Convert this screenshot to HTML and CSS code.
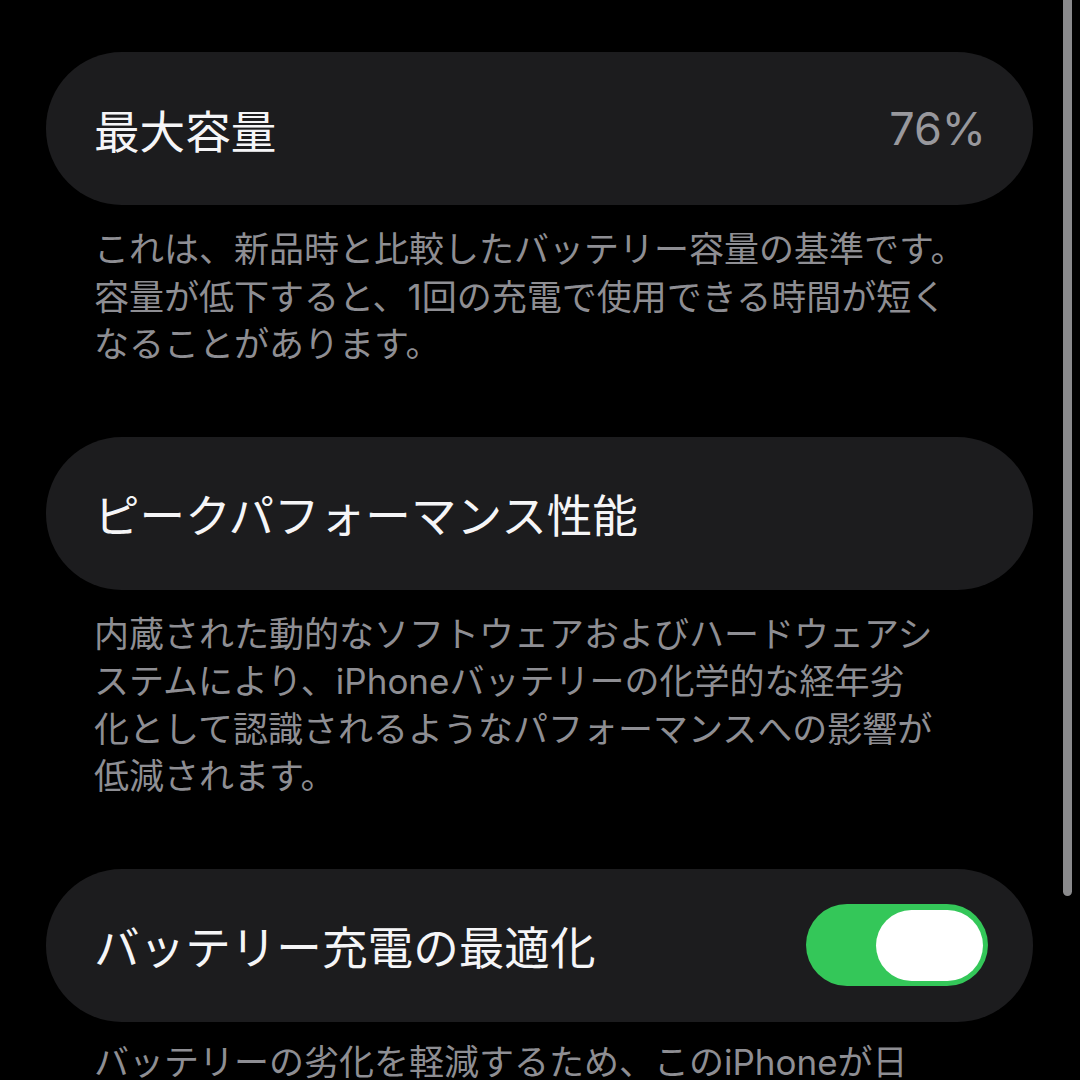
FILE: index.html
```html
<!DOCTYPE html>
<html lang="ja">
<head>
<meta charset="utf-8">
<title>バッテリーの状態</title>
<link rel="stylesheet" href="styles.css">
</head>
<body>
<div class="page">
  <div class="card">
    <span class="title">最大容量</span>
    <span class="value">76%</span>
  </div>
  <p class="desc">これは、新品時と比較したバッテリー容量の基準です。<br>容量が低下すると、1回の充電で使用できる時間が短く<br>なることがあります。</p>

  <div class="card">
    <span class="title">ピークパフォーマンス性能</span>
  </div>
  <p class="desc">内蔵された動的なソフトウェアおよびハードウェアシ<br>ステムにより、iPhoneバッテリーの化学的な経年劣<br>化として認識されるようなパフォーマンスへの影響が<br>低減されます。</p>

  <div class="card">
    <span class="title">バッテリー充電の最適化</span>
    <div class="toggle"><div class="knob"></div></div>
  </div>
  <p class="desc last">バッテリーの劣化を軽減するため、このiPhoneが日</p>
</div>
<div class="scrollbar"></div>
</body>
</html>
```
FILE: styles.css
```css
html, body {
  margin: 0;
  padding: 0;
  background: #000;
  height: 1080px;
  overflow: hidden;
}
body {
  font-family: Inter, "Noto Sans CJK JP", sans-serif;
  color: #fff;
  position: relative;
}
.page {
  display: flex;
  flex-direction: column;
  width: 987px;
  padding: 52px 0 0 46px;
}
.card {
  height: 153px;
  border-radius: 76px;
  background: #1c1c1e;
  display: flex;
  align-items: center;
  justify-content: space-between;
  padding: 0 45px 0 48px;
  box-sizing: border-box;
}
.title {
  font-size: 45.6px;
  color: #f5f5f7;
}
.value {
  font-size: 45px;
  color: #98989d;
  padding-right: 2px;
}
.desc {
  margin: 21px 0 68px 0;
  padding-left: 48px;
  font-size: 35px;
  line-height: 47.5px;
  color: #8e8e93;
  white-space: nowrap;
}
.desc.last {
  margin: 17px 0 0 0;
}
.toggle {
  width: 182px;
  height: 82px;
  border-radius: 41px;
  background: #34c759;
  display: flex;
  align-items: center;
  justify-content: flex-end;
  padding-right: 5px;
  box-sizing: border-box;
}
.knob {
  width: 107px;
  height: 71px;
  border-radius: 36px;
  background: #fff;
}
.scrollbar {
  position: absolute;
  top: 0;
  left: 1063px;
  width: 9px;
  height: 896px;
  border-radius: 0 0 5px 5px;
  background: #8a8a8c;
}
```
